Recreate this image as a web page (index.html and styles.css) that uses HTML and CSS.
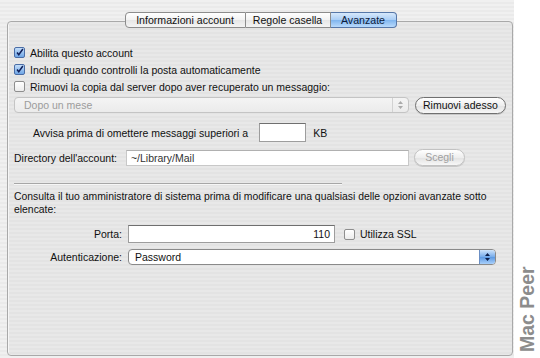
FILE: index.html
```html
<!DOCTYPE html>
<html>
	<head>
		<meta charset="utf-8">
		<title>Avanzate</title>
		<link rel="stylesheet" href="styles.css">
	</head>
	<body>
		<div class="window">
			<div class="tabs">
				<div class="tab">Informazioni account</div>
				<div class="tab">Regole casella</div>
				<div class="tab tab_on">Avanzate</div>
			</div>
			<div class="panel">
				<label class="check">
					<span class="box box_on"><svg width="11" height="11" viewBox="0 0 11 11"><path d="M2.5 5.5 L4.6 8.3 L9.6 1.2" fill="none" stroke="#10205a" stroke-width="1.8"/></svg></span>
					Abilita questo account
				</label>
				<label class="check">
					<span class="box box_on"><svg width="11" height="11" viewBox="0 0 11 11"><path d="M2.5 5.5 L4.6 8.3 L9.6 1.2" fill="none" stroke="#10205a" stroke-width="1.8"/></svg></span>
					Includi quando controlli la posta automaticamente
				</label>
				<label class="check">
					<span class="box"></span>
					Rimuovi la copia dal server dopo aver recuperato un messaggio:
				</label>

				<div class="row row_remove">
					<div class="popup popup_off">
						<span>Dopo un mese</span>
						<span class="arrows"><svg width="7" height="10" viewBox="0 0 7 10"><path d="M1 4 L3.5 1 L6 4 Z M1 6 L3.5 9 L6 6 Z" fill="#aaa"/></svg></span>
					</div>
					<div class="button button_remove">Rimuovi adesso</div>
				</div>

				<div class="row row_warn">
					<span>Avvisa prima di omettere messaggi superiori a</span>
					<div class="field field_kb"></div>
					<span>KB</span>
				</div>

				<div class="row row_dir">
					<span>Directory dell'account:</span>
					<div class="field field_dir">~/Library/Mail</div>
					<div class="button button_off">Scegli</div>
				</div>

				<div class="sep"></div>

				<p class="note">Consulta il tuo amministratore di sistema prima di modificare una qualsiasi delle opzioni avanzate sotto elencate:</p>

				<div class="form">
					<span class="lbl">Porta:</span>
					<div class="row">
						<div class="field field_port">110</div>
						<label class="check check_ssl"><span class="box"></span>Utilizza SSL</label>
					</div>
					<span class="lbl">Autenticazione:</span>
					<div class="popup popup_auth">
						<span>Password</span>
						<span class="arrows arrows_blue"><svg width="7" height="10" viewBox="0 0 7 10"><path d="M1 4 L3.5 1 L6 4 Z M1 6 L3.5 9 L6 6 Z" fill="#0d1f4a"/></svg></span>
					</div>
				</div>
			</div>
		</div>
		<div class="mark">Mac Peer</div>
	</body>
</html>
```

FILE: styles.css
```css
*{
	margin: 0;
	padding: 0;
	box-sizing: border-box;
}
body{
	width: 540px;
	height: 358px;
	background: #ffffff;
	font-family: "Liberation Sans", "DejaVu Sans", sans-serif;
	font-size: 10px;
	color: #111;
	position: relative;
	overflow: hidden;
}
.window{
	width: 514px;
	height: 358px;
	padding-top: 12px;
	display: flex;
	flex-direction: column;
	background: repeating-linear-gradient(#f0f0f0 0 2px, #eaeaea 2px 4px);
}

/* tabs */
.tabs{
	display: flex;
	justify-content: center;
	margin-left: 7px;
	height: 16px;
	position: relative;
	z-index: 2;
}
.tab{
	height: 16px;
	line-height: 14px;
	text-align: center;
	white-space: nowrap;
	border: 1px solid #8c8c8c;
	border-left: none;
	background: linear-gradient(#ffffff, #f2f2f2 50%, #e6e6e6 51%, #f4f4f4);
	font-size: 10.6px;
}
.tab:first-child{
	border-left: 1px solid #8c8c8c;
	border-radius: 4px 0 0 4px;
	width: 121px;
}
.tab:nth-child(2){
	width: 85px;
}
.tab_on{
	width: 66px;
	border-color: #5677a8;
	border-radius: 0 4px 4px 0;
	background: linear-gradient(#d6e8fb, #a9cdf5 50%, #7fb5ee 51%, #b9dafc);
	color: #0d1b3a;
}

/* panel */
.panel{
	flex: 1;
	margin: -7px 1px 2px 7px;
	padding: 22px 6px 0 6px;
	border: 1px solid #a9a9a9;
	border-radius: 4px;
	box-shadow: inset 1px 0 0 #f6f6f6;
	background: repeating-linear-gradient(#e8e8e8 0 2px, #e3e3e3 2px 4px);
}
.check{
	display: flex;
	align-items: center;
	height: 17px;
	gap: 5px;
	font-size: 10.5px;
	white-space: nowrap;
}
.box{
	width: 11px;
	height: 11px;
	border: 1px solid #8e8e8e;
	border-radius: 2px;
	background: linear-gradient(#ffffff, #ececec);
	display: flex;
	overflow: hidden;
	flex: none;
}
.box_on{
	border-color: #4a6da6;
	background: linear-gradient(#c3ddf9, #6fa6e6);
}
.box svg{
	margin: -1px 0 0 0;
}

.row{
	display: flex;
	align-items: center;
	gap: 6px;
	white-space: nowrap;
}
.row_remove{
	margin-top: 2px;
	height: 16px;
}
.popup{
	height: 16px;
	border: 1px solid #9a9a9a;
	border-radius: 4px;
	background: linear-gradient(#ffffff, #f0f0f0);
	display: flex;
	align-items: center;
	justify-content: space-between;
	padding-left: 9px;
	font-size: 10.5px;
}
.popup_off{
	width: 398px;
	color: #9c9c9c;
	border-color: #c4c4c4;
	background: linear-gradient(#f4f4f4, #ebebeb);
}
.arrows{
	width: 16px;
	height: 14px;
	display: flex;
	align-items: center;
	justify-content: center;
	border-left: 1px solid #d2d2d2;
}
.arrows_blue{
	border-left: 1px solid #6b8fc4;
	border-radius: 0 3px 3px 0;
	background: linear-gradient(#cfe4fb, #74aaea 50%, #5b98e2 51%, #a9d0fb);
}
.button{
	height: 17px;
	line-height: 15px;
	text-align: center;
	white-space: nowrap;
	border: 1px solid #707070;
	border-radius: 9px;
	background: linear-gradient(#ffffff, #eeeeee 50%, #e2e2e2 51%, #f7f7f7);
	font-size: 10.5px;
	box-shadow: 0 1px 0 #c8c8c8;
}
.button_remove{
	width: 92px;
}
.button_off{
	width: 51px;
	color: #a0a0a0;
	border-color: #c2c2c2;
}

.row_warn{
	margin-top: 10px;
	padding-left: 19px;
	font-size: 10.5px;
	gap: 7px;
}
.field{
	height: 17px;
	background: #ffffff;
	border: 1px solid #9d9d9d;
	border-top-color: #6f6f6f;
	font-size: 10.5px;
	line-height: 15px;
	padding: 0 4px;
}
.field_kb{
	width: 47px;
	height: 19px;
	margin-left: 4px;
}
.row_dir{
	margin-top: 7px;
	font-size: 10.5px;
	gap: 9px;
}
.field_dir{
	width: 283px;
	height: 16px;
	border-color: #c8c8c8;
	border-top-color: #b0b0b0;
	color: #333;
	margin-right: -4px;
}

.sep{
	width: 328px;
	height: 2px;
	margin-top: 17px;
	border-top: 1px solid #a6a6a6;
	border-bottom: 1px solid #f6f6f6;
}
.note{
	margin-top: 5px;
	font-size: 10.4px;
	line-height: 13px;
}

.form{
	margin-top: 9px;
	display: grid;
	grid-template-columns: 108px 368px;
	column-gap: 6px;
	row-gap: 6px;
	align-items: center;
	font-size: 10.5px;
}
.lbl{
	text-align: right;
}
.field_port{
	width: 207px;
	height: 18px;
	text-align: right;
	line-height: 16px;
}
.check_ssl{
	margin-left: 3px;
}
.popup_auth{
	width: 368px;
	padding-left: 6px;
	border-color: #8a8a8a;
	background: #ffffff;
}

/* watermark */
.mark{
	position: absolute;
	left: 517px;
	top: 262px;
	width: 90px;
	height: 20px;
	transform-origin: 0 0;
	transform: translate(0, 90px) rotate(-90deg);
	font-family: "Liberation Sans", Arial, sans-serif;
	font-weight: bold;
	font-size: 19.5px;
	line-height: 20px;
	color: #8c8c8c;
	white-space: nowrap;
}
```
